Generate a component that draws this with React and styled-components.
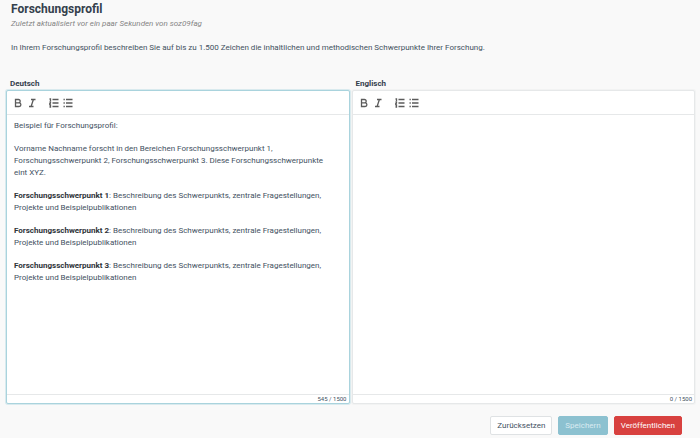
import React, { useState } from "react";
import styled, { createGlobalStyle } from "styled-components";

const GlobalStyle = createGlobalStyle`
  * {
    box-sizing: border-box;
  }

  body {
    margin: 0;
    background: #f9f9f9;
    color: #43515f;
    font-family: Roboto, "Open Sans", sans-serif;
    font-size: 8px;
    line-height: 12px;
  }
`;

const Page = styled.main`
  display: flex;
  flex-direction: column;
  padding: 0 5px 4px 6px;
`;

const Header = styled.header`
  padding: 0 5px;
`;

const Title = styled.h1`
  margin: 0;
  color: #34404c;
  font-size: 12px;
  font-weight: 700;
  line-height: 18px;
`;

const Updated = styled.p`
  margin: 0 0 12px;
  color: #858585;
  font-style: italic;
`;

const Intro = styled.p`
  margin: 0;
`;

const Editors = styled.div`
  display: grid;
  grid-template-columns: 1fr 1fr;
  gap: 2px;
  margin-top: 24px;
`;

const Field = styled.section`
  display: flex;
  flex-direction: column;
  min-width: 0;
`;

const Label = styled.span`
  padding: 0 4px;
  color: #34404c;
  font-weight: 700;
`;

const Box = styled.div`
  display: flex;
  flex-direction: column;
  border: 1px solid ${(props) => (props.$active ? "#a9d3dd" : "#e6e8e9")};
  border-radius: 2px;
  background: #fff;
  box-shadow: 0 0 0 1px ${(props) => (props.$active ? "#d9eaee" : "#f2f3f3")};
`;

const Toolbar = styled.div`
  display: flex;
  gap: 8px;
  padding: 5px 4px;
  border-bottom: 1px solid #e6e8e9;
`;

const Group = styled.div`
  display: flex;
`;

const Tool = styled.button`
  display: flex;
  align-items: center;
  justify-content: center;
  width: 14px;
  height: 13px;
  padding: 0;
  border: 0;
  background: none;
  color: #5b5b5b;
`;

const Icon = styled.svg`
  width: 10px;
  height: 10px;
  fill: none;
  stroke: currentColor;
`;

const Content = styled.div`
  min-height: 279px;
  padding: 5px 14px 5px 7px;
  outline: none;

  p {
    margin: 0 0 11px;
  }

  strong {
    color: #2e3338;
  }
`;

const Counter = styled.div`
  padding: 0 2px;
  border-top: 1px solid #e6e8e9;
  font-size: 6px;
  line-height: 8px;
  text-align: right;
`;

const Actions = styled.footer`
  display: flex;
  justify-content: flex-end;
  gap: 6px;
  padding: 12px 13px 0;
`;

const Button = styled.button`
  height: 19px;
  padding: 0 6px;
  border: 1px solid ${(props) => props.$border || props.$background};
  border-radius: 2px;
  background: ${(props) => props.$background};
  color: ${(props) => props.$color};
  font: inherit;
`;

const tools = [
  [
    {
      name: "Fett",
      path: "M2.5 1.5h3a1.7 1.7 0 0 1 0 3.4h-3zM2.5 4.9h3.6a1.8 1.8 0 0 1 0 3.6H2.5z",
    },
    { name: "Kursiv", path: "M4 1.5h4.5M2 8.5h4.5M6.4 1.5 4.1 8.5" },
  ],
  [
    {
      name: "Nummerierte Liste",
      path: "M3.5 1.5H9.5M3.5 5H9.5M3.5 8.5H9.5M.5 1h1v2M.5 4h1v1l-1 1h1.2M.5 7.2h1v2h-1M.6 8.2h1",
    },
    {
      name: "Liste",
      path: "M3 1.5H9.5M3 5H9.5M3 8.5H9.5M.5 1.5h1.3M.5 5h1.3M.5 8.5h1.3",
    },
  ],
];

function Editor({ id, label, count, active, onFocus, children }) {
  return (
    <Field>
      <Label id={id}>{label}</Label>
      <Box $active={active} onFocus={onFocus}>
        <Toolbar role="toolbar" aria-labelledby={id}>
          {tools.map((group) => (
            <Group key={group[0].name}>
              {group.map((tool) => (
                <Tool key={tool.name} type="button" aria-label={tool.name}>
                  <Icon viewBox="0 0 10 10" aria-hidden="true">
                    <path d={tool.path} strokeWidth="1.3" />
                  </Icon>
                </Tool>
              ))}
            </Group>
          ))}
        </Toolbar>
        <Content
          role="textbox"
          aria-multiline="true"
          aria-labelledby={id}
          contentEditable
          suppressContentEditableWarning
          spellCheck={false}
        >
          {children}
        </Content>
        <Counter>{`${count} / 1500`}</Counter>
      </Box>
    </Field>
  );
}

function App() {
  const [active, setActive] = useState("de");

  return (
    <Page>
      <GlobalStyle />
      <Header>
        <Title>Forschungsprofil</Title>
        <Updated>Zuletzt aktualisiert vor ein paar Sekunden von soz09fag</Updated>
        <Intro>
          In Ihrem Forschungsprofil beschreiben Sie auf bis zu 1.500 Zeichen die
          inhaltlichen und methodischen Schwerpunkte Ihrer Forschung.
        </Intro>
      </Header>
      <Editors>
        <Editor
          id="de"
          label="Deutsch"
          count={545}
          active={active === "de"}
          onFocus={() => setActive("de")}
        >
          <p>Beispiel für Forschungsprofil:</p>
          <p>
            Vorname Nachname forscht in den Bereichen Forschungsschwerpunkt 1,
            Forschungsschwerpunkt 2, Forschungsschwerpunkt 3. Diese
            Forschungsschwerpunkte eint XYZ.
          </p>
          {[1, 2, 3].map((n) => (
            <p key={n}>
              <strong>{`Forschungsschwerpunkt ${n}`}</strong>: Beschreibung des
              Schwerpunkts, zentrale Fragestellungen, Projekte und
              Beispielpublikationen
            </p>
          ))}
        </Editor>
        <Editor
          id="en"
          label="Englisch"
          count={0}
          active={active === "en"}
          onFocus={() => setActive("en")}
        />
      </Editors>
      <Actions>
        <Button type="button" $background="#fff" $border="#dfe2e4" $color="#43515f">
          Zurücksetzen
        </Button>
        <Button type="button" $background="#8cc1d0" $color="#d9ebf0">
          Speichern
        </Button>
        <Button type="button" $background="#d8413f" $color="#fff">
          Veröffentlichen
        </Button>
      </Actions>
    </Page>
  );
}

export default App;
